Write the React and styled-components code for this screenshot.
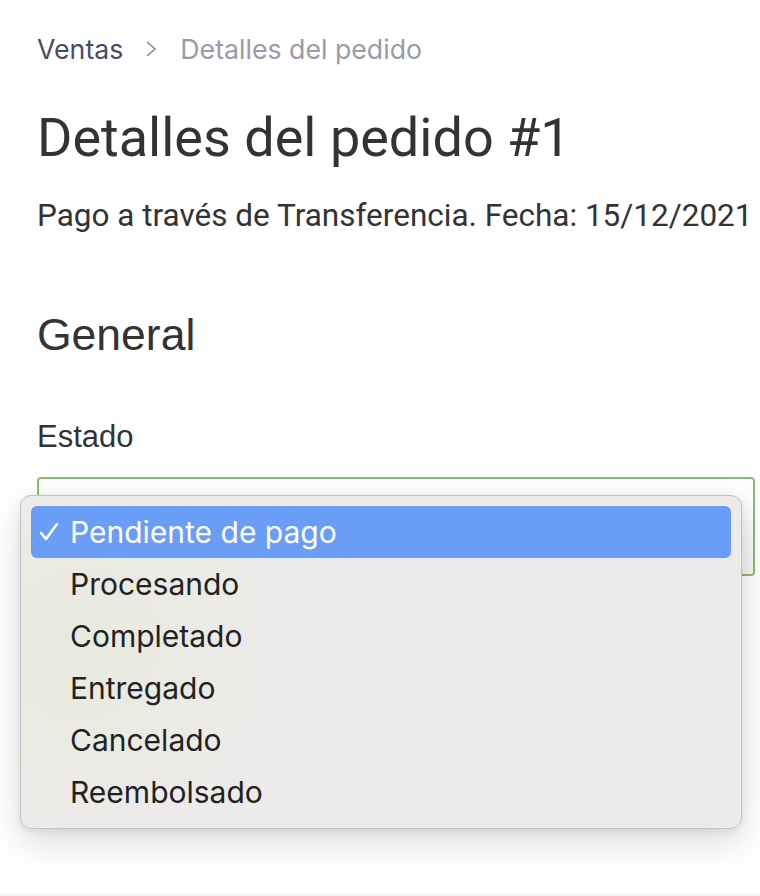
import React from "react";
import styled, { createGlobalStyle } from "styled-components";

const GlobalStyle = createGlobalStyle`
  html, body {
    margin: 0;
    padding: 0;
    background: #ffffff;
  }
  body {
    font-family: Roboto, "Liberation Sans", sans-serif;
    overflow: hidden;
  }
`;

const Page = styled.div`
  width: 760px;
  height: 896px;
  overflow: hidden;
  box-sizing: border-box;
  padding: 30px 0 0 37px;
  position: relative;
  background: #fff;
  border-bottom: 3px solid #f7f7f7;
`;

const Breadcrumb = styled.nav`
  display: flex;
  align-items: center;
  gap: 22px;
  font-family: Inter, "Noto Sans", sans-serif;
  font-size: 26.7px;
  line-height: 38px;
  white-space: nowrap;
`;

const Crumb = styled.span`
  color: ${(p) => (p.$current ? "#9a9aa8" : "#4a4a66")};
`;

const Title = styled.h1`
  margin: 38px 0 0;
  font-weight: 400;
  font-size: 54px;
  line-height: 64px;
  color: #333;
  white-space: nowrap;
`;

const Subtitle = styled.p`
  margin: 26px 0 0;
  font-size: 31.5px;
  line-height: 40px;
  color: #333;
  white-space: nowrap;
`;

const SectionTitle = styled.h2`
  margin: 72px 0 0;
  font-family: "Liberation Sans", Arial, sans-serif;
  font-weight: 400;
  font-size: 44.5px;
  line-height: 54px;
  color: #333;
`;

const Label = styled.label`
  display: block;
  margin-top: 55px;
  font-family: "Liberation Sans", Arial, sans-serif;
  font-size: 31px;
  line-height: 40px;
  color: #333;
`;

const Field = styled.div`
  position: relative;
  margin-top: 20px;
  width: 718px;
`;

const SelectBox = styled.div`
  box-sizing: border-box;
  height: 99px;
  border: 2px solid #8cbc6c;
  border-radius: 4px;
  background: linear-gradient(#ffffff, #f3f3f3);
`;

const Menu = styled.ul`
  position: absolute;
  top: 18px;
  left: -17px;
  width: 722px;
  box-sizing: border-box;
  margin: 0;
  padding: 10px;
  list-style: none;
  background: radial-gradient(circle at 60px 150px, #e9eade 0%, #ecebe9 180px);
  border: 1px solid #c2c2c2;
  border-radius: 11px;
  box-shadow: 0 14px 36px rgba(0, 0, 0, 0.14), 0 2px 8px rgba(0, 0, 0, 0.08);
`;

const Option = styled.li`
  display: flex;
  align-items: center;
  height: 52px;
  padding-left: 8px;
  border-radius: 6px;
  font-family: Inter, "Noto Sans", sans-serif;
  font-size: 30px;
  color: ${(p) => (p.$selected ? "#ffffff" : "#222")};
  background: ${(p) => (p.$selected ? "#699df6" : "transparent")};
`;

const Check = styled.span`
  display: flex;
  align-items: center;
  width: 31px;
  height: 100%;
`;

const options = [
  "Pendiente de pago",
  "Procesando",
  "Completado",
  "Entregado",
  "Cancelado",
  "Reembolsado",
];

export default function App() {
  return (
    <>
      <GlobalStyle />
      <Page>
        <Breadcrumb>
          <Crumb>Ventas</Crumb>
          <svg width="13" height="20" viewBox="0 0 13 20">
            <path d="M2 3l8 7-8 7" fill="none" stroke="#8a8a96" strokeWidth="1.6" />
          </svg>
          <Crumb $current>Detalles del pedido</Crumb>
        </Breadcrumb>
        <Title>Detalles del pedido #1</Title>
        <Subtitle>Pago a través de Transferencia. Fecha: 15/12/2021 10:32</Subtitle>
        <SectionTitle>General</SectionTitle>
        <Label>Estado</Label>
        <Field>
          <SelectBox />
          <Menu>
            {options.map((o, i) => (
              <Option key={o} $selected={i === 0}>
                <Check>
                  {i === 0 && (
                    <svg width="20" height="20" viewBox="0 0 20 20">
                      <path
                        d="M2 11l5 6L18 2"
                        fill="none"
                        stroke="#fff"
                        strokeWidth="2.6"
                        strokeLinecap="round"
                        strokeLinejoin="round"
                      />
                    </svg>
                  )}
                </Check>
                {o}
              </Option>
            ))}
          </Menu>
        </Field>
      </Page>
    </>
  );
}
